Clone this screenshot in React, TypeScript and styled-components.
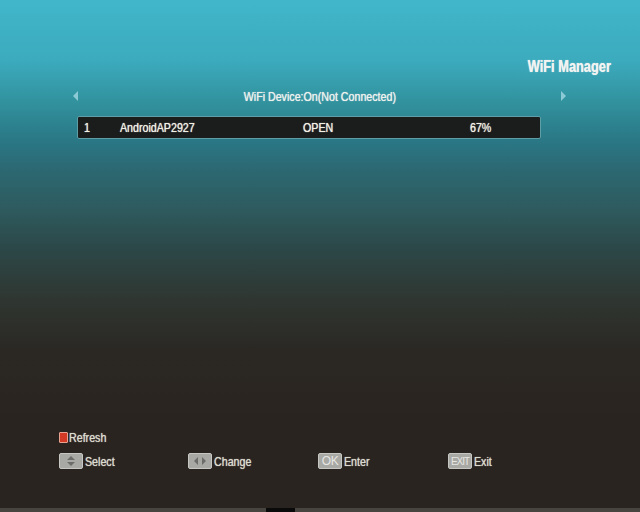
import styled, { createGlobalStyle } from 'styled-components';

const GlobalStyle = createGlobalStyle`
  html, body {
    margin: 0;
    padding: 0;
    background: #2a2420;
  }
  #root {
    width: 640px;
    height: 512px;
  }
`;

const Screen = styled.div`
  width: 640px;
  height: 512px;
  display: flex;
  flex-direction: column;
  overflow: hidden;
  font-family: "Liberation Sans", Arial, sans-serif;
  background: linear-gradient(
    180deg,
    #41b6ca 0px,
    #3cabbe 60px,
    #32939f 100px,
    #2a7886 140px,
    #2c6872 170px,
    #2e5a5e 210px,
    #2c4747 250px,
    #2f3631 300px,
    #2b2824 350px,
    #2a2420 420px,
    #2a2420 100%
  );
`;

// the box draws an Arial Narrow-like face: Arial squeezed to 82%
const Narrow = styled.span<{ $origin?: string; $scale?: number }>`
  display: inline-block;
  white-space: nowrap;
  transform: scaleX(${(p) => p.$scale ?? 0.82});
  transform-origin: ${(p) => p.$origin ?? 'left'} center;
  text-shadow: 0 0 1px currentColor;
`;

const TitleBar = styled.div`
  display: flex;
  justify-content: flex-end;
  padding: 57px 29px 0 0;
  height: 21px;
`;

const Title = styled.h1`
  margin: 0;
  font-size: 16px;
  line-height: 20px;
  font-weight: bold;
  color: #f2f4f2;
`;

const Panel = styled.div`
  margin: 9px 0 0 73px;
  width: 493px;
`;

const DeviceBar = styled.div`
  display: flex;
  align-items: center;
  justify-content: space-between;
  height: 18px;
`;

const Arrow = styled.span<{ $dir: 'left' | 'right' }>`
  width: 0;
  height: 0;
  border-top: 5px solid transparent;
  border-bottom: 5px solid transparent;
  ${(p) =>
    p.$dir === 'left'
      ? 'border-right: 5px solid #8ccbd6;'
      : 'border-left: 5px solid #8ccbd6;'}
`;

const DeviceStatus = styled.span`
  font-size: 13px;
  color: #eef1ee;
`;

const ListRow = styled.div`
  margin: 11px 0 0 4px;
  width: 456px;
  height: 21px;
  box-sizing: content-box;
  border: 1px solid #5e9ea6;
  border-radius: 2px;
  background: #1b1d1d;
  display: grid;
  grid-template-columns: 36px 183px 167px 1fr;
  align-items: center;
  padding-left: 6px;
  font-size: 13px;
  color: #f3f1e6;
`;

const Spacer = styled.div`
  flex: 1;
`;

const Footer = styled.div`
  padding: 0 0 39px 59px;
  display: flex;
  flex-direction: column;
  gap: 8px;
`;

const HintRow = styled.div`
  display: grid;
  grid-template-columns: 129px 130px 130px 130px;
  align-items: center;
  height: 16px;
`;

const Hint = styled.div`
  display: flex;
  align-items: center;
  gap: 2px;
  font-size: 13px;
  color: #dcdbcf;
`;

const RedKey = styled.span`
  width: 7px;
  height: 9px;
  background: #d23a26;
  border: 1px solid #e9a291;
  border-radius: 1px;
  margin-right: -1px;
`;

const KeyBox = styled.span<{ $small?: boolean }>`
  width: 22px;
  height: 14px;
  border: 1px solid #c6c6c2;
  border-radius: 2px;
  background: #a8a8a4;
  display: flex;
  align-items: center;
  justify-content: center;
  gap: 4px;
  font-size: ${(p) => (p.$small ? 10 : 12)}px;
  color: #e6e6e2;
  letter-spacing: ${(p) => (p.$small ? -1 : -0.3)}px;
`;

const Tri = styled.span<{ $dir: 'up' | 'down' | 'left' | 'right' }>`
  width: 0;
  height: 0;
  ${(p) =>
    p.$dir === 'up'
      ? 'border-left: 4px solid transparent; border-right: 4px solid transparent; border-bottom: 4px solid #6c6c6a;'
      : p.$dir === 'down'
      ? 'border-left: 4px solid transparent; border-right: 4px solid transparent; border-top: 4px solid #6c6c6a;'
      : p.$dir === 'left'
      ? 'border-top: 4px solid transparent; border-bottom: 4px solid transparent; border-right: 4px solid #6c6c6a;'
      : 'border-top: 4px solid transparent; border-bottom: 4px solid transparent; border-left: 4px solid #6c6c6a;'}
`;

const VStack = styled.span`
  display: flex;
  flex-direction: column;
  gap: 2px;
`;

const BottomStrip = styled.div`
  height: 4px;
  background: #47433e;
  display: flex;
  padding-left: 266px;
`;

const Notch = styled.span`
  width: 29px;
  background: #0a0a0a;
`;

const networks = [{ id: 1, name: 'AndroidAP2927', security: 'OPEN', signal: '67%' }];

export default function App() {
  return (
    <>
      <GlobalStyle />
      <Screen>
        <TitleBar>
          <Title>
            <Narrow $origin="right" $scale={0.8}>WiFi Manager</Narrow>
          </Title>
        </TitleBar>
        <Panel>
          <DeviceBar>
            <Arrow $dir="left" />
            <DeviceStatus>
              <Narrow $origin="center">WiFi Device:On(Not Connected)</Narrow>
            </DeviceStatus>
            <Arrow $dir="right" />
          </DeviceBar>
          {networks.map((n) => (
            <ListRow key={n.id}>
              <Narrow>{n.id}</Narrow>
              <Narrow>{n.name}</Narrow>
              <Narrow>{n.security}</Narrow>
              <Narrow>{n.signal}</Narrow>
            </ListRow>
          ))}
        </Panel>
        <Spacer />
        <Footer>
          <HintRow>
            <Hint>
              <RedKey />
              <Narrow>Refresh</Narrow>
            </Hint>
          </HintRow>
          <HintRow>
            <Hint>
              <KeyBox>
                <VStack>
                  <Tri $dir="up" />
                  <Tri $dir="down" />
                </VStack>
              </KeyBox>
              <Narrow>Select</Narrow>
            </Hint>
            <Hint>
              <KeyBox>
                <Tri $dir="left" />
                <Tri $dir="right" />
              </KeyBox>
              <Narrow>Change</Narrow>
            </Hint>
            <Hint>
              <KeyBox>OK</KeyBox>
              <Narrow>Enter</Narrow>
            </Hint>
            <Hint>
              <KeyBox $small>EXIT</KeyBox>
              <Narrow>Exit</Narrow>
            </Hint>
          </HintRow>
        </Footer>
        <BottomStrip>
          <Notch />
        </BottomStrip>
      </Screen>
    </>
  );
}
